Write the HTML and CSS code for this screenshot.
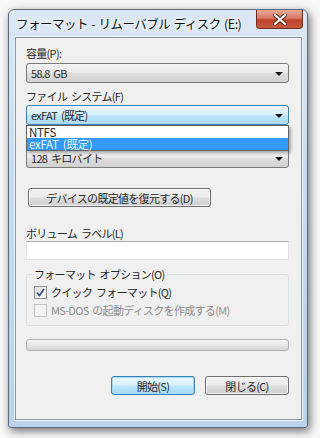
FILE: index.html
```html
<!DOCTYPE html>
<html lang="ja">
<head>
    <meta charset="UTF-8">
    <meta name="viewport" content="width=device-width, initial-scale=1.0">
    <title>フォーマット</title>
    <link rel="stylesheet" href="styles.css">
</head>
<body>

<div class="window">
    <div class="titlebar">
        <span class="title">フォーマット - リムーバブル ディスク (E:)</span>
        <div class="close-btn">
            <svg width="14" height="11" viewBox="0 0 14 11">
                <path d="M2 1 L12 10 M12 1 L2 10" stroke="#5a1f17" stroke-width="4" stroke-linecap="square"/>
                <path d="M2 1 L12 10 M12 1 L2 10" stroke="#ffffff" stroke-width="2.2" stroke-linecap="square"/>
            </svg>
        </div>
    </div>

    <div class="client">
        <div class="label">容量(P):</div>
        <div class="combo">
            <span>58.8 GB</span>
            <span class="arrow"></span>
        </div>

        <div class="label">ファイル システム(F)</div>
        <div class="combo-wrap">
            <div class="combo combo-hot">
                <span>exFAT (既定)</span>
                <span class="arrow"></span>
            </div>
            <ul class="dropdown">
                <li>NTFS</li>
                <li class="selected">exFAT (既定)</li>
            </ul>
        </div>

        <!-- label under the open list, covered by it -->
        <div class="label label-covered">アロケーション ユニット サイズ(A)</div>
        <div class="combo">
            <span>128 キロバイト</span>
            <span class="arrow"></span>
        </div>

        <div class="btn btn-restore">デバイスの既定値を復元する(D)</div>

        <div class="label label-volume">ボリューム ラベル(L)</div>
        <div class="textbox"></div>

        <fieldset class="options">
            <legend>フォーマット オプション(O)</legend>
            <div class="check">
                <span class="box">
                    <svg width="9" height="9" viewBox="0 0 9 9">
                        <path d="M1 4.5 L3.5 7.5 L8 1" fill="none" stroke="#3b4f86" stroke-width="1.8"/>
                    </svg>
                </span>
                クイック フォーマット(Q)
            </div>
            <div class="check disabled">
                <span class="box"></span>
                MS-DOS の起動ディスクを作成する(M)
            </div>
        </fieldset>

        <div class="progress"></div>

        <div class="actions">
            <div class="btn btn-default">開始(S)</div>
            <div class="btn">閉じる(C)</div>
        </div>
    </div>
</div>

</body>
</html>
```

FILE: styles.css
```css
body {
    margin: 0;
    padding: 0;
    width: 320px;
    height: 438px;
    overflow: hidden;
    background-color: #f7f7f7;
    font-family: "Noto Sans CJK JP", "Noto Sans", sans-serif;
    font-size: 11px;
    letter-spacing: -0.7px;
    word-spacing: 2px;
    color: #262626;
}
.window {
    margin: 9px 0 0 8px;
    width: 298px;
    height: 417px;
    border: 1px solid #5b6b7c;
    border-radius: 6px 6px 3px 3px;
    background: linear-gradient(to bottom, #dce8f4 0%, #c8dbee 40%, #bcd2ea 100%);
    box-shadow: 2px 3px 8px rgba(0, 0, 0, 0.55);
    display: flex;
    flex-direction: column;
}
.titlebar {
    height: 27px;
    display: flex;
    justify-content: space-between;
    align-items: flex-start;
    padding-left: 7px;
}
.title {
    margin-top: 5px;
    font-size: 12.5px;
    line-height: 18px;
    letter-spacing: -0.5px;
    word-spacing: 1px;
    white-space: nowrap;
    color: #111;
    text-shadow: 0 0 6px #ffffff, 0 0 3px #ffffff;
}
.close-btn {
    width: 45px;
    height: 18px;
    margin-right: 4px;
    border: 1px solid #6b2d24;
    border-top: none;
    border-radius: 0 0 4px 4px;
    background: linear-gradient(to bottom, #e9a999 0%, #d97a66 45%, #c0422c 55%, #c85a3c 100%);
    display: flex;
    align-items: center;
    justify-content: center;
    flex-shrink: 0;
}
.client {
    margin: 0 5px 7px 6px;
    flex: 1;
    border: 1px solid #8696a8;
    box-shadow: 0 0 0 1px #eef4fb;
    background-color: #f0f0f0;
    padding: 0 12px 0 10px;
    display: flex;
    flex-direction: column;
}
.label {
    height: 16px;
    line-height: 16px;
    margin-top: 5px;
    white-space: nowrap;
}
.client > .label:first-child {
    margin-top: 7px;
}
.label-covered {
    visibility: hidden;
}
.combo {
    height: 18px;
    margin-top: 2px;
    border: 1px solid #7a7a7a;
    border-radius: 3px;
    background: linear-gradient(to bottom, #f4f4f4 0%, #ebebeb 48%, #dddddd 52%, #d2d2d2 100%);
    display: flex;
    align-items: center;
    justify-content: space-between;
    padding: 0 5px 0 4px;
    line-height: 16px;
}
.combo-hot {
    border-color: #3c7fb1;
    background: linear-gradient(to bottom, #eaf6fd 0%, #d9f0fc 48%, #bee6fd 52%, #a9dbf6 100%);
}
.arrow {
    width: 0;
    height: 0;
    border-left: 4px solid transparent;
    border-right: 4px solid transparent;
    border-top: 4px solid #111;
    margin-top: 2px;
}
.combo-wrap {
    position: relative;
    margin-top: 1px;
}
.combo-wrap .combo {
    margin-top: 0;
}
.dropdown {
    position: absolute;
    left: 0;
    top: 20px;
    width: 261px;
    margin: 0;
    padding: 0;
    list-style: none;
    background-color: #ffffff;
    border: 1px solid #646464;
    box-shadow: 2px 2px 3px rgba(0, 0, 0, 0.3);
    z-index: 2;
}
.dropdown li {
    height: 12px;
    line-height: 12px;
    padding-left: 2px;
    font-size: 11.5px;
    letter-spacing: -0.3px;
}
.dropdown li.selected {
    background-color: #3399ff;
    color: #e8f4ff;
}
.btn {
    height: 17px;
    border: 1px solid #707070;
    border-radius: 3px;
    background: linear-gradient(to bottom, #f2f2f2 0%, #ebebeb 48%, #dddddd 52%, #cfcfcf 100%);
    display: flex;
    align-items: center;
    justify-content: center;
    line-height: 16px;
    white-space: nowrap;
    box-shadow: inset 0 0 0 1px rgba(255, 255, 255, 0.7);
}
.btn-restore {
    width: 181px;
    margin-top: 20px;
    margin-left: 2px;
}
.label-volume {
    margin-top: 18px;
}
.textbox {
    height: 17px;
    border: 1px solid #e2e3ea;
    border-top-color: #abadb3;
    background-color: #ffffff;
}
.options {
    margin: 6px 0 0 0;
    padding: 2px 7px 5px 7px;
    border: 1px solid #d5dfe5;
    border-radius: 3px;
    min-width: 0;
}
.options legend {
    padding: 0 2px;
    margin-left: -2px;
    height: 16px;
    line-height: 16px;
}
.check {
    height: 16px;
    line-height: 16px;
    display: flex;
    align-items: center;
    margin-bottom: 2px;
    white-space: nowrap;
}
.box {
    width: 11px;
    height: 11px;
    margin-right: 4px;
    border: 1px solid #8f8f8f;
    background: linear-gradient(135deg, #dcdcdc 0%, #f4f4f4 60%, #ffffff 100%);
    display: flex;
    align-items: center;
    justify-content: center;
}
.check.disabled {
    color: #8d8d8d;
}
.check.disabled .box {
    border-color: #c4c4c4;
    background: #f4f4f4;
}
.progress {
    height: 10px;
    margin-top: 13px;
    border: 1px solid #b2b2b2;
    border-radius: 3px;
    background: linear-gradient(to bottom, #f6f6f6 0%, #e6e6e6 50%, #d6d6d6 100%);
}
.actions {
    margin-top: 25px;
    display: flex;
    justify-content: flex-end;
    gap: 10px;
}
.actions .btn {
    width: 82px;
}
.btn-default {
    border-color: #3c7fb1;
    background: linear-gradient(to bottom, #eaf6fd 0%, #d9f0fc 48%, #bee6fd 52%, #a7d9f5 100%);
    box-shadow: inset 0 0 0 1px #9fdcf5;
}
```
